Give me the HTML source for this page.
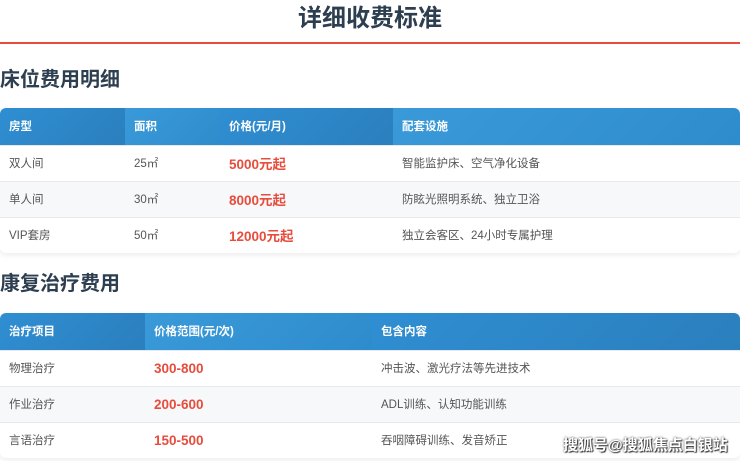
<!DOCTYPE html>
<html><head><meta charset="utf-8"><style>
*{margin:0;padding:0;box-sizing:border-box}
body{width:740px;height:461px;overflow:hidden;background:#fff;font-family:"Liberation Sans","Noto Sans CJK SC",sans-serif;color:#444;position:relative}
.t{position:absolute;left:0;width:740px;top:4px;text-align:center;font-size:24px;font-weight:bold;color:#2c3e50;line-height:30px}
.line{position:absolute;left:0;top:42px;width:740px;height:2px;background:#e74c3c}
h2{position:absolute;left:0;font-size:20px;font-weight:bold;color:#2c3e50;line-height:26px}
table{position:absolute;left:0;width:740px;border-collapse:collapse;font-size:11.5px;border-radius:6px;overflow:hidden;box-shadow:0 2px 6px rgba(0,0,0,.08)}
th{height:37px;text-align:left;padding-left:9px;color:#fff;font-weight:bold;font-size:11.5px;background:linear-gradient(135deg,#2f8ed2,#2b7fbd)}
th:nth-child(2n){background:linear-gradient(135deg,#3a9ad9,#2e8ccc)}
td{height:36px;padding-left:9px;border-top:1px solid #e6e9ee;color:#555}
tr:nth-child(2) td{background:#f6f8fa}
.r{color:#e74c3c;font-weight:bold;font-size:13.5px}
.wm{position:absolute;left:563px;top:434px;font-size:15px;color:#fff;font-weight:bold;text-shadow:0 0 2px #333,1px 1px 1px #333}
</style></head><body>
<div class="t">详细收费标准</div>
<div class="line"></div>
<h2 style="top:67px">床位费用明细</h2>
<table style="top:108px">
<thead><tr><th style="width:125px">房型</th><th style="width:95px">面积</th><th style="width:173px">价格(元/月)</th><th>配套设施</th></tr></thead>
<tbody>
<tr><td>双人间</td><td>25㎡</td><td class="r">5000元起</td><td>智能监护床、空气净化设备</td></tr>
<tr><td>单人间</td><td>30㎡</td><td class="r">8000元起</td><td>防眩光照明系统、独立卫浴</td></tr>
<tr><td>VIP套房</td><td>50㎡</td><td class="r">12000元起</td><td>独立会客区、24小时专属护理</td></tr>
</tbody></table>
<h2 style="top:271px">康复治疗费用</h2>
<table style="top:313px">
<thead><tr><th style="width:145px">治疗项目</th><th style="width:227px">价格范围(元/次)</th><th>包含内容</th></tr></thead>
<tbody>
<tr><td>物理治疗</td><td class="r">300-800</td><td>冲击波、激光疗法等先进技术</td></tr>
<tr><td>作业治疗</td><td class="r">200-600</td><td>ADL训练、认知功能训练</td></tr>
<tr><td>言语治疗</td><td class="r">150-500</td><td>吞咽障碍训练、发音矫正</td></tr>
</tbody></table>
<div class="wm">搜狐号@搜狐焦点白银站</div>
</body></html>
